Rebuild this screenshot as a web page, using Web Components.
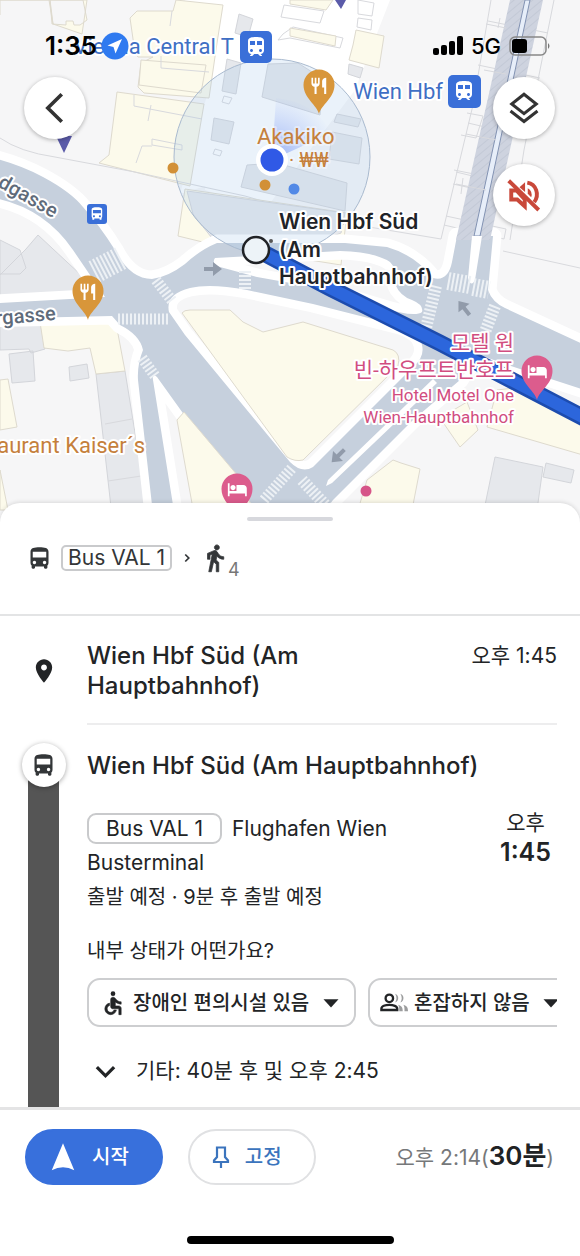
<!DOCTYPE html>
<html lang="ko">
<head>
<meta charset="utf-8">
<meta name="viewport" content="width=device-width, initial-scale=1">
<title>Wien Hbf Süd</title>
<style>
  body {
    margin: 0;
    background: #fff;
    color: #222426;
    font-family: Inter, "Noto Sans CJK KR", sans-serif;
    font-size: 20px;
    line-height: 30px;
  }
</style>
</head>
<body>
<transit-app></transit-app>

<script>
// 24x24 icons, all filled with the current colour
const icons = {
  bus: '<path d="M4 16c0 .88.39 1.67 1 2.22V20c0 .55.45 1 1 1h1c.55 0 1-.45 1-1v-1h8v1c0 .55.45 1 1 1h1c.55 0 1-.45 1-1v-1.78c.61-.55 1-1.34 1-2.22V6c0-3.5-3.58-4-8-4s-8 .5-8 4v10zm3.5 1c-.83 0-1.5-.67-1.5-1.5S6.67 14 7.5 14s1.5.67 1.5 1.5S8.33 17 7.5 17zm9 0c-.83 0-1.5-.67-1.5-1.5s.67-1.5 1.5-1.5 1.5.67 1.5 1.5-.67 1.5-1.5 1.5zm1.5-6H6V6h12v5z"/>',
  train: '<path d="M12 2c-4 0-8 .5-8 4v9.5C4 17.43 5.57 19 7.5 19L6 20.5v.5h2.23l2-2H14l2 2h2v-.5L16.5 19c1.93 0 3.5-1.57 3.5-3.5V6c0-3.5-3.58-4-8-4zM7.5 17c-.83 0-1.5-.67-1.5-1.5S6.67 14 7.5 14s1.5.67 1.5 1.5S8.33 17 7.5 17zm3.5-7H6V6h5v4zm2 0V6h5v4h-5zm3.5 7c-.83 0-1.5-.67-1.5-1.5s.67-1.5 1.5-1.5 1.5.67 1.5 1.5-.67 1.5-1.5 1.5z"/>',
  walk: '<path d="M13.5 5.5c1.1 0 2-.9 2-2s-.9-2-2-2-2 .9-2 2 .9 2 2 2zM9.8 8.9L7 23h2.1l1.8-8 2.1 2v6h2v-7.5l-2.1-2 .6-3C14.8 12 16.8 13 19 13v-2c-1.9 0-3.5-1-4.3-2.4l-1-1.6c-.4-.6-1-1-1.7-1-.3 0-.5.1-.8.1L6 8.3V13h2V9.6l1.8-.7" stroke="currentColor" stroke-width=".6"/>',
  place: '<path d="M12 2C8.13 2 5 5.13 5 9c0 5.25 7 13 7 13s7-7.75 7-13c0-3.87-3.13-7-7-7zm0 9.5c-1.38 0-2.5-1.12-2.5-2.5s1.12-2.5 2.5-2.5 2.5 1.12 2.5 2.5-1.12 2.5-2.5 2.5z"/>',
  accessible: '<circle cx="12" cy="4" r="2"/><path stroke="currentColor" stroke-width=".5" d="M19 13v-2c-1.54.02-3.09-.75-4.07-1.83l-1.29-1.43c-.17-.19-.38-.34-.61-.45H13c-.35-.2-.75-.3-1.19-.26C10.76 7.11 10 8.04 10 9.09V15c0 1.1.9 2 2 2h5v5h2v-5.5c0-1.1-.9-2-2-2h-3v-3.45c1.29 1.07 3.25 1.94 5 1.95zm-6.17 5c-.41 1.16-1.52 2-2.83 2-1.66 0-3-1.34-3-3 0-1.31.84-2.41 2-2.83V12.1c-2.28.46-4 2.48-4 4.9 0 2.76 2.24 5 5 5 2.42 0 4.44-1.72 4.9-4h-2.07z"/>',
  bed: '<path d="M7 13c1.66 0 3-1.34 3-3S8.66 7 7 7s-3 1.34-3 3 1.34 3 3 3zm12-6h-8v7H3V5H1v15h2v-3h18v3h2v-9c0-2.21-1.79-4-4-4z"/>',
  food: '<path d="M11 9H9V2H7v7H5V2H3v7c0 2.12 1.66 3.84 3.75 3.97V22h2.5v-9.03C11.34 12.84 13 11.12 13 9V2h-2v7zm5-3v8h2.5v8H21V2c-2.76 0-5 2.24-5 4z"/>',
  back: '<path d="M16.500 2.800 7.200 12l9.300 9.200" fill="none" stroke="currentColor" stroke-width="2.400"/>',
  layers: '<path d="M12 2.800 20.200 9.300 12 15.800 3.800 9.300z" fill="none" stroke="currentColor" stroke-width="2"/><path d="m3 14 9 7 9-7" fill="none" stroke="currentColor" stroke-width="2"/>',
  mute: '<path d="M3.500 9v6h4l5 4.500V15L7 9z" fill="none" stroke="currentColor" stroke-width="2.600"/><path d="M12.700 3.500v6.500L9 6.800z"/><path d="M14.200 3.800c6 1 8.300 8 4.600 13" fill="none" stroke="currentColor" stroke-width="2.600"/><path d="M14.500 7.500a4.800 4.800 0 0 1 2.300 6l-2.300-2.300z"/><path d="m1.800 2.500 20 19.500" fill="none" stroke="currentColor" stroke-width="2.600"/>',
  chevronRight: '<path d="m9 6 6 6-6 6" fill="none" stroke="currentColor" stroke-width="3"/>',
  chevronDown: '<path d="m3 7.500 9 9 9-9" fill="none" stroke="currentColor" stroke-width="3.400"/>',
  caret: '<path d="M2 7h20L12 18z"/>',
  start: '<path d="M12 1 21 22.500q-9-4.500-18 0z"/>',
  pin: '<path d="M8 2.500h8v9.500l3 3.500v1.500H5v-1.500L8 12zM12 17v6" fill="none" stroke="currentColor" stroke-width="2.200"/>',
  people: '<g opacity=".45"><path d="M13 4a4 4 0 0 1 0 7.500c1.500-2.500 1.500-5 0-7.500zM17.500 4a4 4 0 0 1 0 7.500c1.500-2.500 1.500-5 0-7.500zM15.500 13.500c3 .8 4 2.500 4 5.500h-3c0-2.500 0-4-1-5.500zM20 13.500c3 .8 4 2.500 4 5.500h-3c0-2.500 0-4-1-5.500z"/></g><circle cx="8" cy="8" r="3.200" fill="none" stroke="currentColor" stroke-width="2"/><path d="M1.200 18v-1c0-4.500 13.600-4.500 13.600 0v1z" fill="none" stroke="currentColor" stroke-width="2"/>'
};

class AppIcon extends HTMLElement {
  constructor() {
    super();
    this.attachShadow({ mode: 'open' });
  }

  connectedCallback() {
    this.shadowRoot.innerHTML = `
      <style>
        :host { display: inline-block; flex: none; width: 24px; height: 24px; }
        svg { display: block; width: 100%; height: 100%; fill: currentColor; }
      </style>
      <svg viewBox="0 0 24 24" aria-hidden="true">${icons[this.getAttribute('name')]}</svg>
    `;
  }
}
customElements.define('app-icon', AppIcon);

class StatusBar extends HTMLElement {
  constructor() {
    super();
    this.attachShadow({ mode: 'open' }).innerHTML = `
      <style>
        :host {
          display: flex;
          align-items: center;
          gap: 8px;
          padding: 31px 29px 0 45px;
          color: #000;
        }
        .time { font-size: 26px; font-weight: 600; }
        .network { font-size: 22px; font-weight: 500; }
        .location { margin-right: auto; margin-left: -4px; }
        svg { display: block; flex: none; }
      </style>
      <span class="time">1:35</span>
      <svg class="location" width="28" height="28" viewBox="0 0 28 28"><circle cx="14" cy="14" r="13.500" fill="#2f7af0"/><path d="M21 7 6.500 13.500l6 1.500 2 6.500z" fill="#fff"/></svg>
      <svg width="30" height="20" viewBox="0 0 30 20"><rect y="12" width="6" height="7" rx="2"/><rect x="8" y="9" width="6" height="10" rx="2"/><rect x="16" y="5" width="6" height="14" rx="2"/><rect x="24" y="0" width="6" height="19" rx="2"/></svg>
      <span class="network">5G</span>
      <svg width="42" height="20" viewBox="0 0 42 20"><rect x="1" y="1" width="36" height="18" rx="5" fill="none" stroke="#888" stroke-width="1.500"/><rect x="3" y="3" width="15" height="14" rx="3"/><path d="M39 7q3 3 0 6z" fill="#777"/></svg>
    `;
  }
}
customElements.define('status-bar', StatusBar);

class RoundButton extends HTMLElement {
  constructor() {
    super();
    this.attachShadow({ mode: 'open' });
  }

  connectedCallback() {
    this.shadowRoot.innerHTML = `
      <style>
        :host { display: block; color: #333; }
        button {
          display: grid;
          place-items: center;
          width: 62px;
          height: 62px;
          padding: 0;
          border: 0;
          border-radius: 50%;
          background: #fff;
          color: inherit;
          box-shadow: 0 1px 4px rgba(0, 0, 0, .3);
        }
        app-icon { width: 36px; height: 36px; }
      </style>
      <button type="button" aria-label="${this.getAttribute('label')}">
        <app-icon name="${this.getAttribute('icon')}"></app-icon>
      </button>
    `;
  }
}
customElements.define('round-button', RoundButton);

class RouteMap extends HTMLElement {
  constructor() {
    super();
    this.attachShadow({ mode: 'open' }).innerHTML = `
      <style>
        :host { display: block; position: relative; overflow: hidden; background: #f6f6f7; }
        .map { position: absolute; inset: 0; width: 100%; height: 100%; }
        .overlay { position: absolute; top: 0; left: 0; right: 0; }
        .building { fill: #fcfaeb; stroke: #dedace; stroke-width: 1; }
        .block { fill: #e6e8ec; stroke: #d3d5da; stroke-width: 1; }
        .plot { fill: none; stroke: #d8d9dd; stroke-width: 1; }
        .road { fill: #c6d0dd; }
        .zebra { fill: none; stroke: #edf1f5; stroke-dasharray: 2 2; }
        .label {
          font-family: Roboto, "Noto Sans CJK KR", sans-serif;
          font-size: 22px;
          paint-order: stroke;
          stroke: #fff;
          stroke-width: 4px;
          stroke-linejoin: round;
        }
        .transit { fill: #3f6fc4; }
        .food { fill: #c5803c; }
        .hotel { fill: #d14d80; }
        .street { fill: #5f6b7a; font-size: 20px; font-weight: 500; }
        .stop { fill: #1f2328; font-family: Inter, sans-serif; font-size: 21px; font-weight: 600; }
        .korean { font-size: 21px; }
        .small { font-size: 17px; }
        .price { font-size: 20px; }
        .end { text-anchor: end; }
      </style>
      <svg class="map" viewBox="0 0 580 560" preserveAspectRatio="xMidYMin slice">
        <defs>
          <pattern id="hatch" width="6" height="6" patternUnits="userSpaceOnUse" patternTransform="rotate(50)">
            <rect width="6" height="6" fill="#ced3df"/><path d="M0 0v6" stroke="#c3c9d6" stroke-width="2"/>
          </pattern>
          <radialGradient id="cone" cx="272" cy="160" r="66" gradientUnits="userSpaceOnUse">
            <stop offset="0" stop-color="#5b80f5" stop-opacity=".6"/><stop offset="1" stop-color="#8fa9f7" stop-opacity="0"/>
          </radialGradient>
          <path id="drop" d="M0 29C-2 20-15.500 13-15.500 0a15.500 15.500 0 0 1 31 0C15.500 13 2 20 0 29z"/>
          <path id="roads" d="M-20 155Q15 162 43 177T83 207Q100 226 115 250Q130 279 152 279Q168 277 185 264Q200 250 217 243H345L387 247Q415 255 433 278Q448 282 452 262L457 236H493L488 290Q492 302 505 308L600 352V395L517 368 485 357Q470 362 460 380L413 420 333 500 310 530H275L233 483 157 377Q152 373 153 380L173 505 176 530H155L152 505 138 380Q137 365 143 350 140 335 120 325L112 316-20 319V304L105 297 73 250Q40 202-20 196zM190 288Q165 294 169 312L185 335 290 462Q302 474 313 467L413 367Q425 357 422 345 420 333 400 326L313 304 247 290Q210 283 190 288zM215 258Q211 264 220 267L257 277 313 287 380 307Q415 318 422 312 424 305 412 300 400 296 395 284 398 270 390 262 375 252 340 251z"/>
        </defs>

        <!-- buildings, north -->
        <path fill="#fff" d="M185 0h75l-35 180-45 14 30-110zM220 0h170l-35 90-90 120-60-20z"/>
        <path class="building" d="M0 0h50l2 24 14 1v-4l7 0 1 4h6l7-5-4-20H0v15M49 0l4 24M50 0h37l-5 34-29-10z"/>
        <path class="building" d="M130 18l7-7h36l3-11 47 5-6 38-8 55-65-5-6-6 3-24 12-6h-15l-3-4z"/>
        <path class="building" d="M141 60l65 5-5 28-62-8zM117 92l87 12-14 82-91-23 10-8z"/>
        <path class="plot" d="M134 95v11l68 13M151 105l-3 16M152 139l30 6v5l-30-5zM136 163l6-17h10M170 26l2-15M161 56v12l48 4M0 138q20 14 55 19l80 15 110 24 110 32"/>
        <path class="block" d="M239 14l14 5-5 18-13-4zM227 59l14 4-5 31-14-3zM214 118l20 4-5 22-18-4z"/>
        <path class="plot" d="M284 5l40 6-4 12-39-6zM283 34l10-7 50 11-3 10-50-10-12 2zM358 0l16 3-2 13-14-2zM358 18l14 2-1 10-14-3zM215 149l7 2-2 5-7-2zM224 96l8 2-3 6-7-2z"/>
        <path class="building" d="M290 0h43l-7 10-36-6zM290 28l46 8-1 10-45-10zM356 30l28 6-5 32-30-8 4-15z"/>
        <path class="block" d="M349 64l14 4-3 10-12-4zM268 64l30-1 25 16-3 36-58-18zM247 165l30-2 70 20-2 28-104-24z"/>
        <path class="block" d="M337 114l24 5-3 8-24-5zM332 132l30 6-3 26-30-5z"/>
        <path class="building" d="M185 189l162 24-6 52-126-20-37-9z"/>
        <path class="block" d="M187 191l158 22-4 20-38 14-88-5-22-28z"/>

        <!-- rail corridor -->
        <path class="plot" d="M491 0l-18 105-32 134-90-15M554 0l-30 150-14 90M467 113l16 3-7 22-15-3M454 170l20 4-3 14-18-4M446 216l60 13-2 10-60-14M488 21l60 12M478 65l62 13M468 123l60 14M456 172l58 14M503 251l77 17"/>

        <!-- blocks, south west -->
        <path class="block" d="M0 240l20 10 6 18-6 6H0zM26 249l12-14 58 54-96 14v-28z"/>
        <path class="block" d="M0 324l40-3 5 28-14 4-2-4-29 1zM9 354l24-3 2 30-23 2zM69 367l18-3 2 14-19 3zM96 374l29-3 22 136h-36z"/>
        <path class="plot" d="M105 424l27-5M108 481l40-6"/>
        <path class="building" d="M40 322l75-4 10 53-29 3-6-26-22 3-24-3zM0 380l8-1 9 48-17 3zM0 470l8 40H0z"/>

        <!-- roads over their white sidewalks -->
        <use href="#roads" fill="#fff" stroke="#fff" stroke-width="17" stroke-linejoin="round"/>
        <path fill="#f6f6f7" d="M300 262l90 8-4 28-66-18z"/>
        <use href="#roads" class="road"/>
        <path fill="url(#hatch)" d="M510 0h33l-53 240h-34z"/>
        <path fill="#e7eef9" stroke="#8292b2" d="M525 0h5l-50 236h-6z"/>
        <path class="plot" stroke-width="2" d="M486 24l20 4M484 70l22 4M466 134l30 6M456 184l30 6M500 18l-2 10M463 178l-2 16"/>
        <path fill="#fff" d="M472 236h10l-7 44q-4 8-7-2zM433 379l4 4-105 100-6 3 2-6z"/>

        <path class="building" d="M182 313q2-3 8-3h40l13 12 20 10 40-10 90 28q8 4 5 16l-95 94q-8 2-16-3z"/>
        <path class="building" d="M177 420l7-8 54 64 20 44h-63zM487 427l10-37 33-4 70 38v36zM440 418l27-16 11 28-18 17zM358 510l9-30 26-20 8 3 19 6-8 41z"/>
        <path class="block" d="M495 457l48 10-6 43h-53zM546 463l28 7-3 13-28-6z"/>

        <!-- crossings -->
        <path class="zebra" stroke-width="24" d="M94 272l27-14"/>
        <path class="zebra" stroke-width="11" d="M156 280l17 22M118 319h51M142 358l13 18M264 500l28-32"/>
        <path class="zebra" stroke-width="12" d="M245 271v19M436 286l-10 42M495 306l-10 26M302 480l28 30"/>
        <path class="zebra" stroke-width="18" d="M448 281l22 4M473 287l16 3"/>

        <!-- one-way arrows -->
        <g fill="#919baa">
          <path id="way" d="M204 267h9v-5l9 7-9 7v-5h-9z"/>
          <use href="#way" transform="translate(464 308) rotate(232) translate(-213 -269)"/>
          <use href="#way" transform="translate(338 456) rotate(135) translate(-213 -269)"/>
        </g>

        <!-- accuracy ring and heading -->
        <circle cx="272" cy="157" r="98" fill="#a6c6ea" fill-opacity=".23" stroke="#a9bacf"/>
        <path fill="url(#cone)" d="M272 160l4-62q40 4 55 35z"/>

        <!-- route line -->
        <path d="M256 249L330 288 440 343 590 421" fill="none" stroke="#1d4cae" stroke-width="17"/>
        <path d="M256 249L330 288 440 343 590 421" fill="none" stroke="#2c66dc" stroke-width="12"/>
        <circle cx="256" cy="250" r="13" fill="#edf3f8" stroke="#202226" stroke-width="2.500"/>
        <circle cx="271" cy="241" r="2" fill="#555"/>

        <!-- places -->
        <g fill="#d29036"><circle cx="173" cy="168" r="5.500"/><circle cx="265" cy="185" r="5.500"/></g>
        <circle cx="294" cy="189" r="5.500" fill="#5289e6"/>
        <circle cx="366" cy="491" r="5.500" fill="#d65588"/>
        <path fill="#5b5ba9" d="M56 136h16l-8 17zM335 0h11l-5 9z"/>
        <g fill="#d8963a"><use href="#drop" x="319" y="85"/><use href="#drop" x="88" y="291"/></g>
        <g fill="#dc5c8d"><use href="#drop" x="537" y="371"/><use href="#drop" x="237" y="489"/></g>
        <g fill="#fff">
          <g transform="translate(309 76) scale(.82)">${icons.food}</g>
          <g transform="translate(78 282) scale(.82)">${icons.food}</g>
          <g transform="translate(527 361) scale(.86)">${icons.bed}</g>
          <g transform="translate(227 479) scale(.86)">${icons.bed}</g>
        </g>
        <g fill="#3a6fd8"><rect x="240" y="31" width="32" height="32" rx="5"/><rect x="448" y="75" width="33" height="33" rx="5"/><rect x="87" y="204" width="20" height="20" rx="3"/></g>
        <g fill="#fff">
          <g transform="translate(244 35)">${icons.train}</g>
          <g transform="translate(452 79)">${icons.train}</g>
          <g transform="translate(89 206) scale(.66)">${icons.bus}</g>
        </g>

        <!-- labels -->
        <text class="label transit end" x="234" y="54">Vienna Central T</text>
        <text class="label transit end" x="443" y="99">Wien Hbf</text>
        <text class="label food" x="257" y="144" stroke-opacity=".4">Akakiko</text>
        <text class="label food price" x="289" y="167" stroke-opacity=".4">· ₩₩</text>
        <text class="label food end" x="145" y="453">aurant Kaiser´s</text>
        <text class="label street" transform="translate(-3 186) rotate(30)">dgasse</text>
        <text class="label street" transform="translate(-4 325) rotate(-5)">rgasse</text>
        <text class="label stop" x="279" y="229">Wien Hbf Süd</text>
        <text class="label stop" x="279" y="257">(Am</text>
        <text class="label stop" x="279" y="284">Hauptbahnhof)</text>
        <text class="label hotel korean end" x="514" y="350">모텔 원</text>
        <text class="label hotel korean end" x="514" y="377">빈-하우프트반호프</text>
        <text class="label hotel small end" x="514" y="401">Hotel Motel One</text>
        <text class="label hotel small end" x="514" y="423">Wien-Hauptbahnhof</text>

        <circle cx="272" cy="160" r="16" fill="#fff"/>
        <circle cx="272" cy="160" r="11.500" fill="#3059e6"/>
      </svg>
      <div class="overlay"><slot></slot></div>
    `;
  }
}
customElements.define('route-map', RouteMap);

class MapControls extends HTMLElement {
  constructor() {
    super();
    this.attachShadow({ mode: 'open' }).innerHTML = `
      <style>
        :host { display: flex; justify-content: space-between; padding: 16px 25px 0 24px; }
        div { display: grid; gap: 25px; }
        .mute { color: #c9483a; }
      </style>
      <round-button icon="back" label="뒤로"></round-button>
      <div>
        <round-button icon="layers" label="지도 유형"></round-button>
        <round-button class="mute" icon="mute" label="음소거"></round-button>
      </div>
    `;
  }
}
customElements.define('map-controls', MapControls);

class LineBadge extends HTMLElement {
  constructor() {
    super();
    this.attachShadow({ mode: 'open' }).innerHTML = `
      <style>
        :host {
          display: inline-block;
          box-sizing: border-box;
          padding: 0 5px;
          border: 2px solid #c9cacc;
          border-radius: 5px;
          font-size: 21px;
          line-height: 22px;
          white-space: nowrap;
        }
        :host([wide]) { padding: 0 17px; border-radius: 9px; line-height: 27px; }
      </style>
      <slot></slot>
    `;
  }
}
customElements.define('line-badge', LineBadge);

class RouteSummary extends HTMLElement {
  constructor() {
    super();
    this.attachShadow({ mode: 'open' }).innerHTML = `
      <style>
        :host {
          display: block;
          padding: 14px 26px 43px;
          border-bottom: 2px solid #e3e4e5;
        }
        .handle { width: 86px; height: 4px; margin: 0 auto 24px; border-radius: 2px; background: #d7d8dd; }
        .steps { display: flex; align-items: center; height: 26px; color: #333638; }
        .bus { width: 27px; height: 27px; margin-right: 8px; }
        .next { width: 14px; height: 14px; margin: 0 6px 0 8px; }
        .walk { width: 30px; height: 30px; }
        .minutes { align-self: flex-end; margin: 0 0 -10px -2px; color: #777; font-size: 18px; line-height: 22px; }
      </style>
      <div class="handle"></div>
      <div class="steps">
        <app-icon class="bus" name="bus"></app-icon>
        <line-badge>Bus VAL 1</line-badge>
        <app-icon class="next" name="chevronRight"></app-icon>
        <app-icon class="walk" name="walk"></app-icon>
        <span class="minutes">4</span>
      </div>
    `;
  }
}
customElements.define('route-summary', RouteSummary);

// one row of the timeline: marker in the gutter, name, time, details below
class RouteStop extends HTMLElement {
  constructor() {
    super();
    this.attachShadow({ mode: 'open' }).innerHTML = `
      <style>
        :host {
          display: grid;
          grid-template-columns: 87px minmax(0, 1fr);
          padding-right: 23px;
        }
        .gutter { display: grid; justify-items: center; align-items: center; }
        :host([riding]) .gutter {
          align-items: start;
          padding-top: 18px;
          background: linear-gradient(#555, #555) 28px 40px / 31px 100% no-repeat;
        }
        .body { padding: 25px 0 22px; border-bottom: 2px solid #ededee; }
        :host([riding]) .body { padding: 26px 0 21px; border: 0; }
        .head { display: flex; justify-content: space-between; gap: 40px; }
        h2 { margin: 0; font-size: 24px; font-weight: 500; line-height: 30px; }
      </style>
      <div class="gutter"><slot name="marker"></slot></div>
      <div class="body">
        <div class="head"><h2><slot name="name"></slot></h2><slot name="time"></slot></div>
        <slot></slot>
      </div>
    `;
  }
}
customElements.define('route-stop', RouteStop);

class OptionChip extends HTMLElement {
  constructor() {
    super();
    this.attachShadow({ mode: 'open' });
  }

  connectedCallback() {
    this.shadowRoot.innerHTML = `
      <style>
        :host { display: block; flex: none; }
        label {
          display: flex;
          align-items: center;
          box-sizing: border-box;
          height: 49px;
          padding: 0 14px 0 10px;
          border: 2px solid #cdced0;
          border-radius: 13px;
          color: #222426;
        }
        .lead { width: 28px; height: 28px; margin-right: 6px; }
        select {
          appearance: none;
          margin: 0 12px 0 0;
          padding: 0;
          border: 0;
          background: none;
          color: inherit;
          font: inherit;
          font-weight: 500;
        }
        .caret { width: 18px; height: 18px; pointer-events: none; }
      </style>
      <label>
        <app-icon class="lead" name="${this.getAttribute('icon')}"></app-icon>
        <select aria-label="${this.getAttribute('label')}"><option>${this.textContent}</option></select>
        <app-icon class="caret" name="caret"></app-icon>
      </label>
    `;
  }
}
customElements.define('option-chip', OptionChip);

class RideDetails extends HTMLElement {
  constructor() {
    super();
    this.attachShadow({ mode: 'open' }).innerHTML = `
      <style>
        :host { display: block; }
        .trip { display: flex; justify-content: space-between; gap: 40px; margin-top: 31px; line-height: 34px; }
        .trip p { margin: 0; }
        .headsign { font-size: 21px; }
        line-badge { margin-right: 4px; }
        .when { flex: none; margin-top: -4px; padding-right: 6px; font-size: 21px; line-height: 30px; text-align: center; }
        .when strong { display: block; font-size: 25px; font-weight: 600; line-height: 28px; }
        .ask { margin: 22px 0 12px; }
        .chips { display: flex; gap: 12px; overflow: hidden; }
        button {
          display: flex;
          align-items: center;
          gap: 19px;
          margin: 29px 0 0;
          padding: 0 7px;
          border: 0;
          background: none;
          color: inherit;
          font: inherit;
          font-size: 21px;
          line-height: 30px;
        }
        button app-icon { width: 23px; height: 23px; }
      </style>
      <div class="trip">
        <div>
          <p class="headsign"><line-badge wide>Bus VAL 1</line-badge> Flughafen Wien Busterminal</p>
          <p>출발 예정 · 9분 후 출발 예정</p>
        </div>
        <div class="when">오후<strong>1:45</strong></div>
      </div>
      <p class="ask">내부 상태가 어떤가요?</p>
      <div class="chips">
        <option-chip icon="accessible" label="편의시설">장애인 편의시설 있음</option-chip>
        <option-chip icon="people" label="혼잡도">혼잡하지 않음</option-chip>
      </div>
      <button type="button"><app-icon name="chevronDown"></app-icon>기타: 40분 후 및 오후 2:45</button>
    `;
  }
}
customElements.define('ride-details', RideDetails);

class PillButton extends HTMLElement {
  constructor() {
    super();
    this.attachShadow({ mode: 'open' });
  }

  connectedCallback() {
    this.shadowRoot.innerHTML = `
      <style>
        :host { display: block; }
        button {
          display: flex;
          align-items: center;
          gap: 12px;
          height: 56px;
          padding: 0 32px 0 19px;
          border: 2px solid #e0e1e3;
          border-radius: 28px;
          background: #fff;
          color: #3b74bd;
          font: inherit;
          font-weight: 500;
          white-space: nowrap;
        }
        :host([primary]) button {
          gap: 14px;
          padding-left: 21px;
          border-color: #3870dc;
          background: #3870dc;
          color: #fff;
        }
        :host([primary]) app-icon { width: 30px; height: 30px; }
      </style>
      <button type="button"><app-icon name="${this.getAttribute('icon')}"></app-icon><slot></slot></button>
    `;
  }
}
customElements.define('pill-button', PillButton);

class TripFooter extends HTMLElement {
  constructor() {
    super();
    this.attachShadow({ mode: 'open' }).innerHTML = `
      <style>
        :host { display: block; padding-bottom: 12px; border-top: 3px solid #e4e4e5; }
        .actions { display: flex; align-items: center; gap: 25px; padding: 19px 26px 51px 25px; }
        .arrival { margin-left: auto; color: #76787a; font-size: 21px; white-space: nowrap; }
        strong { color: #202224; font-size: 26px; font-weight: 600; }
        .home { width: 207px; height: 8px; margin: 0 auto; border-radius: 4px; background: #000; }
      </style>
      <div class="actions">
        <pill-button primary icon="start">시작</pill-button>
        <pill-button icon="pin">고정</pill-button>
        <span class="arrival">오후 2:14(<strong>30분</strong>)</span>
      </div>
      <div class="home"></div>
    `;
  }
}
customElements.define('trip-footer', TripFooter);

class TransitApp extends HTMLElement {
  constructor() {
    super();
    this.attachShadow({ mode: 'open' }).innerHTML = `
      <style>
        :host { display: flex; flex-direction: column; min-height: 100vh; }
        route-map { flex: 1; min-height: 320px; }
        main {
          position: relative;
          margin-top: -20px;
          border-radius: 20px 20px 0 0;
          background: #fff;
          box-shadow: 0 -1px 4px rgba(0, 0, 0, .12);
        }
        .place { width: 28px; height: 28px; }
        .bus {
          display: grid;
          place-items: center;
          width: 44px;
          height: 44px;
          border-radius: 50%;
          background: #fff;
          box-shadow: 0 1px 5px rgba(0, 0, 0, .35);
        }
        .bus app-icon { width: 27px; height: 27px; color: #333638; }
        .time { flex: none; font-size: 21px; }
      </style>
      <route-map>
        <status-bar></status-bar>
        <map-controls></map-controls>
      </route-map>
      <main>
        <route-summary></route-summary>
        <route-stop>
          <app-icon class="place" slot="marker" name="place"></app-icon>
          <span slot="name">Wien Hbf Süd (Am Hauptbahnhof)</span>
          <span class="time" slot="time">오후 1:45</span>
        </route-stop>
        <route-stop riding>
          <span class="bus" slot="marker"><app-icon name="bus"></app-icon></span>
          <span slot="name">Wien Hbf Süd (Am Hauptbahnhof)</span>
          <ride-details></ride-details>
        </route-stop>
        <trip-footer></trip-footer>
      </main>
    `;
  }
}
customElements.define('transit-app', TransitApp);
</script>
</body>
</html>
